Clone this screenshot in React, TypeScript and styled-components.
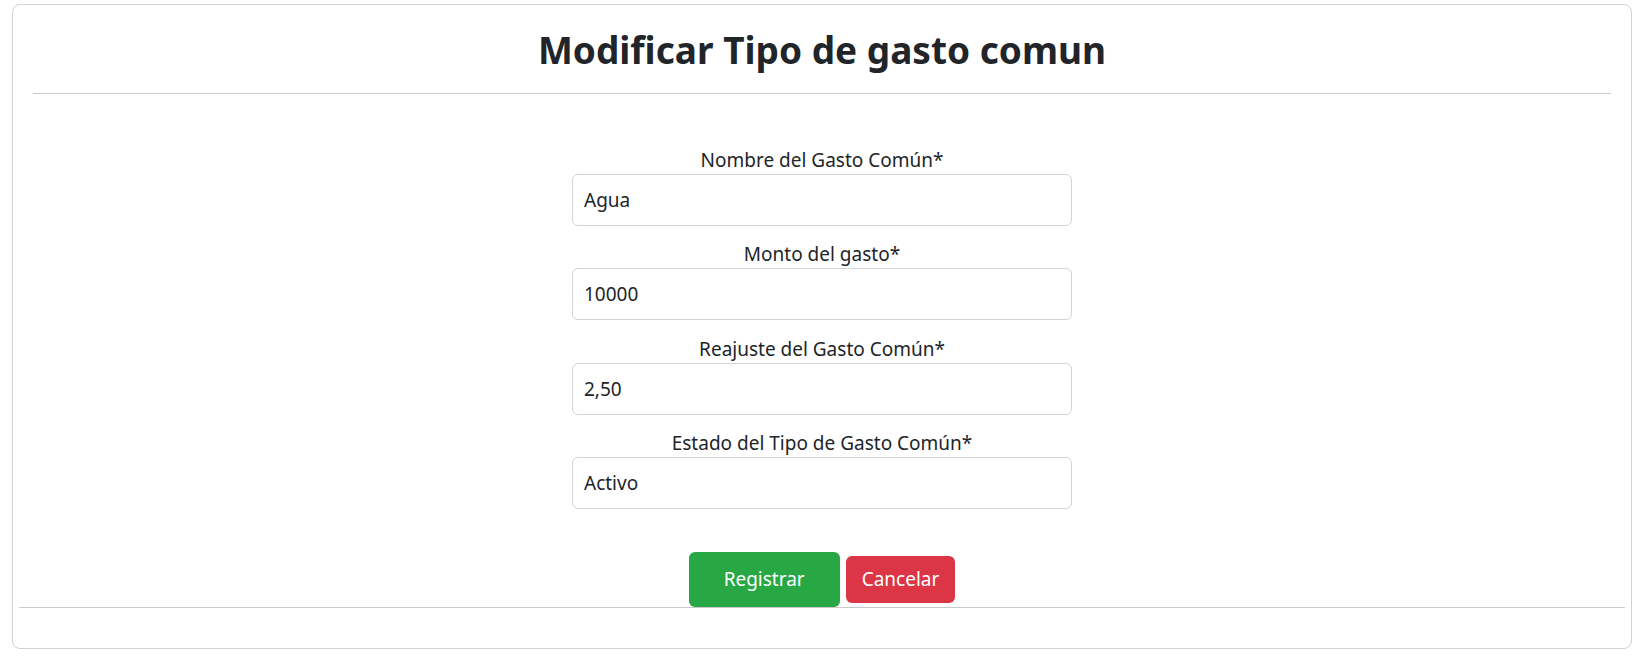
import React from "react";
import styled, { createGlobalStyle } from "styled-components";

const GlobalStyle = createGlobalStyle`
  body {
    margin: 0;
    background: #fff;
    font-family: "Noto Sans", "Open Sans", sans-serif;
    color: #212529;
  }
  * {
    box-sizing: border-box;
  }
`;

const Card = styled.div`
  margin: 4px 17px 17px 12px;
  border: 1px solid #d2d2d2;
  border-radius: 8px;
  padding-bottom: 40px;
  background: #fff;
`;

const Title = styled.h1`
  margin: 0;
  padding-top: 23px;
  font-size: 37px;
  line-height: 44px;
  font-weight: 700;
  text-align: center;
`;

const Rule = styled.hr<{ $inset: string }>`
  margin: 0 ${(p) => p.$inset};
  border: 0;
  border-top: 1px solid #c9c9c9;
  height: 0;
`;

const TitleRule = styled(Rule)`
  margin-top: 21px;
`;

const Form = styled.form`
  padding-top: 52px;
  display: flex;
  flex-direction: column;
  align-items: center;
`;

const Group = styled.div`
  width: 500px;
  margin-bottom: 14.4px;
  display: flex;
  flex-direction: column;
`;

const Label = styled.label`
  display: block;
  text-align: center;
  font-size: 19px;
  line-height: 28px;
`;

const Input = styled.input`
  width: 100%;
  height: 52px;
  padding: 0 11px;
  border: 1px solid #ced4da;
  border-radius: 6px;
  font-family: inherit;
  font-size: 19px;
  color: #212529;
  background: #fff;
  outline: none;
`;

const Actions = styled.div`
  display: flex;
  justify-content: center;
  align-items: center;
  gap: 6px;
  margin-top: 28px;
`;

const Button = styled.button<{ $variant: "success" | "danger" }>`
  border: none;
  border-radius: 6px;
  color: #fff;
  font-family: inherit;
  font-size: 19px;
  cursor: pointer;
  background: ${(p) => (p.$variant === "success" ? "#28a745" : "#dc3545")};
  height: ${(p) => (p.$variant === "success" ? "55px" : "47px")};
  padding: ${(p) => (p.$variant === "success" ? "0 35px" : "0 16px")};
`;

const fields = [
  { label: "Nombre del Gasto Común*", value: "Agua" },
  { label: "Monto del gasto*", value: "10000" },
  { label: "Reajuste del Gasto Común*", value: "2,50" },
  { label: "Estado del Tipo de Gasto Común*", value: "Activo" },
];

const App: React.FC = () => {
  return (
    <>
      <GlobalStyle />
      <Card>
        <Title>Modificar Tipo de gasto comun</Title>
        <TitleRule $inset="20px" />
        <Form onSubmit={(e) => e.preventDefault()}>
          {fields.map((f) => (
            <Group key={f.label}>
              <Label>{f.label}</Label>
              <Input defaultValue={f.value} />
            </Group>
          ))}
        </Form>
        <Actions>
          <Button $variant="success">Registrar</Button>
          <Button $variant="danger">Cancelar</Button>
        </Actions>
        <Rule $inset="6px" />
      </Card>
    </>
  );
};

export default App;
